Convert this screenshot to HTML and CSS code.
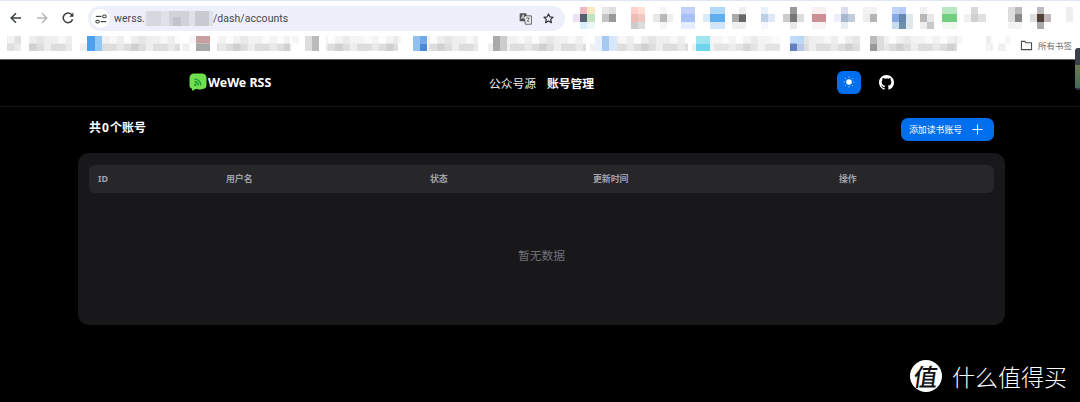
FILE: index.html
```html
<!DOCTYPE html>
<html lang="zh-CN">
<head>
<meta charset="utf-8">
<title>WeWe RSS</title>
<link rel="stylesheet" href="styles.css">
</head>
<body>
<header class="browser">
  <div class="toolbar">
    <div class="navbtns">
      <svg class="tb-icon" viewBox="0 0 16 16"><path d="M13 8H3.500M8 3.200 3.200 8 8 12.800" fill="none" stroke="#3c4043" stroke-width="1.500"/></svg>
      <svg class="tb-icon" viewBox="0 0 16 16"><path d="M3 8h9.500M8 3.200 12.800 8 8 12.800" fill="none" stroke="#b4b6b9" stroke-width="1.500"/></svg>
      <svg class="tb-icon" viewBox="0 0 16 16"><path d="M12.600 9.300A4.800 4.800 0 1 1 11.500 4.500L13 6" fill="none" stroke="#3c4043" stroke-width="1.500"/><path d="M13.400 2.600v4.100H9.300z" fill="#3c4043"/></svg>
    </div>
    <div class="omnibox">
      <span class="chip"><svg viewBox="0 0 14 14" class="chip-icon"><path d="M1 4h6.500" fill="none" stroke="#3c4043" stroke-width="1.400"/><rect x="9" y="2.400" width="4" height="3.200" rx="1.600" fill="none" stroke="#3c4043" stroke-width="1.200"/><rect x="1" y="8.400" width="4" height="3.200" rx="1.600" fill="none" stroke="#3c4043" stroke-width="1.200"/><path d="M6.500 10h6.500" stroke="#3c4043" stroke-width="1.400"/></svg></span>
      <span class="url">werss.</span>
      <svg class="url-blur" viewBox="0 0 68 15"><rect width="68" height="15" fill="#dfe1e9"/><rect x="2" y="0" width="14" height="15" fill="#d6d8e0"/><rect x="24" y="0" width="20" height="15" fill="#d0d2da"/><rect x="50" y="0" width="14" height="15" fill="#c8cad2"/><rect x="28" y="6" width="8" height="9" fill="#c2c4cc"/></svg>
      <span class="url">/dash/accounts</span>
      <span class="omni-end">
        <svg class="omni-icon" viewBox="0 0 16 16"><rect x=".8" y="1.500" width="8.500" height="10" rx="1" fill="#55595e"/><path d="M6.500 4.800h8.700v10.200H7.800z" fill="#fff" stroke="#3c4043" stroke-width="1"/><path d="M8.800 7.500h4.400M11 6.800v.8M9.200 12.500c1.800-1 2.800-2.500 3.100-5M9.800 9.500c.8 1.300 1.800 2.300 3.100 3" fill="none" stroke="#3c4043" stroke-width=".9"/><path d="M3 8.500l2-5 2 5M3.800 7h2.500" fill="none" stroke="#fff" stroke-width=".9"/></svg>
        <svg class="omni-icon" viewBox="0 0 16 16"><path d="M8 2.300 9.700 6l4 .4-3 2.700.9 4L8 11l-3.600 2.100.9-4-3-2.700 4-.4z" fill="none" stroke="#2a2c2f" stroke-width="1.400" stroke-linejoin="round"/></svg>
      </span>
    </div>
    <svg class="ext-mosaic" viewBox="573 7 507 22">
      <rect x="580" y="7" width="7" height="7.300" fill="#eeb8c0"/><rect x="587" y="7" width="8" height="7.300" fill="#f8e8c4"/><rect x="573" y="14" width="7" height="8" fill="#f0e0f5"/><rect x="580" y="14" width="7" height="8" fill="#556070"/><rect x="587" y="14" width="8" height="8" fill="#c4e2c4"/><rect x="580" y="22" width="7" height="7" fill="#d8f0f8"/><rect x="587" y="22" width="8" height="7" fill="#eef8f8"/>
      <rect x="602" y="7" width="7" height="7.300" fill="#e8e8e8"/><rect x="609" y="7" width="7" height="7.300" fill="#ddd"/><rect x="602" y="14" width="7" height="8" fill="#c4c4c4"/><rect x="609" y="14" width="7" height="8" fill="#999"/>
      <rect x="631" y="7" width="7" height="7.300" fill="#fcd0c8"/><rect x="638" y="7" width="7" height="7.300" fill="#fde0d8"/><rect x="631" y="14" width="7" height="8" fill="#eebbb5"/><rect x="638" y="14" width="7" height="8" fill="#f0c8c0"/><rect x="631" y="22" width="7" height="7" fill="#ccc"/><rect x="638" y="22" width="7" height="7" fill="#ddd"/>
      <rect x="660" y="7" width="7" height="7.300" fill="#f4f4f4"/><rect x="653" y="14" width="7" height="8" fill="#e8e8e8"/><rect x="660" y="14" width="7" height="8" fill="#b8b8b8"/><rect x="667" y="14" width="6" height="8" fill="#eee"/><rect x="660" y="22" width="7" height="7" fill="#f5f5f5"/>
      <rect x="681" y="7" width="14" height="7.300" fill="#c0d0fb"/><rect x="681" y="14" width="14" height="8" fill="#a8c0f8"/><rect x="681" y="22" width="14" height="7" fill="#e4ecfd"/>
      <rect x="710" y="7" width="15" height="7.300" fill="#b0d8f8"/><rect x="703" y="14" width="7" height="8" fill="#d8ecfc"/><rect x="710" y="14" width="15" height="8" fill="#60aef0"/><rect x="710" y="22" width="15" height="7" fill="#d0e4fa"/>
      <rect x="732" y="14" width="7" height="8" fill="#aaa"/><rect x="739" y="14" width="7" height="8" fill="#666"/><rect x="732" y="22" width="14" height="7" fill="#f0f0f0"/><rect x="739" y="7" width="7" height="7.300" fill="#eee"/>
      <rect x="761" y="7" width="7" height="7.300" fill="#e8f0fc"/><rect x="761" y="14" width="7" height="8" fill="#c0cfe8"/><rect x="768" y="14" width="7" height="8" fill="#e0e8f5"/><rect x="761" y="22" width="7" height="7" fill="#f4f6fb"/>
      <rect x="790" y="7" width="7" height="7.300" fill="#999"/><rect x="783" y="14" width="7" height="8" fill="#ccc"/><rect x="790" y="14" width="7" height="8" fill="#777"/><rect x="797" y="14" width="7" height="8" fill="#ddd"/><rect x="790" y="22" width="7" height="7" fill="#e8e8e8"/>
      <rect x="812" y="7" width="14" height="7.300" fill="#f8f0f0"/><rect x="812" y="14" width="14" height="8" fill="#cc8f96"/><rect x="812" y="22" width="14" height="7" fill="#f8f4f4"/>
      <rect x="841" y="7" width="7" height="7.300" fill="#dde"/><rect x="834" y="14" width="7" height="8" fill="#eef"/><rect x="841" y="14" width="7" height="8" fill="#a8b8cc"/><rect x="848" y="14" width="7" height="8" fill="#c0ccd8"/><rect x="841" y="22" width="7" height="7" fill="#e8ecf4"/>
      <rect x="863" y="7" width="14" height="7.300" fill="#f2f2f2"/><rect x="863" y="14" width="7" height="8" fill="#eee"/><rect x="870" y="14" width="7" height="8" fill="#b5b5b5"/>
      <rect x="892" y="7" width="7" height="7.300" fill="#c0d4fa"/><rect x="899" y="7" width="7" height="7.300" fill="#b8ccf8"/><rect x="892" y="14" width="7" height="8" fill="#88a8e8"/><rect x="899" y="14" width="7" height="8" fill="#6688aa"/><rect x="906" y="14" width="7" height="8" fill="#dde8ee"/><rect x="892" y="22" width="7" height="7" fill="#c8dcf0"/><rect x="899" y="22" width="7" height="7" fill="#6f90ac"/><rect x="906" y="22" width="7" height="7" fill="#e0e8ee"/>
      <rect x="920" y="7" width="7" height="7.300" fill="#f0f0f0"/><rect x="920" y="14" width="7" height="8" fill="#b8b8b8"/><rect x="927" y="14" width="7" height="8" fill="#e8e8e8"/><rect x="920" y="22" width="7" height="7" fill="#eee"/><rect x="927" y="22" width="7" height="7" fill="#c8c8c8"/>
      <rect x="942" y="7" width="15" height="7.300" fill="#b8e8c0"/><rect x="942" y="14" width="15" height="8" fill="#70d080"/><rect x="942" y="22" width="15" height="7" fill="#f0f8f0"/>
      <rect x="971" y="7" width="7" height="7.300" fill="#d8d8d8"/><rect x="964" y="14" width="7" height="8" fill="#f0f0f0"/><rect x="971" y="14" width="7" height="8" fill="#d0d0d0"/><rect x="978" y="14" width="8" height="8" fill="#e0e0e0"/>
      <rect x="1008" y="7" width="7" height="7.300" fill="#ddd"/><rect x="1015" y="7" width="7" height="7.300" fill="#bbb"/><rect x="1008" y="14" width="7" height="8" fill="#ddd"/><rect x="1015" y="14" width="7" height="8" fill="#888"/><rect x="1008" y="22" width="14" height="7" fill="#f4f4f4"/>
      <rect x="1037" y="7" width="7" height="7.300" fill="#bbb"/><rect x="1030" y="14" width="7" height="8" fill="#ddd"/><rect x="1037" y="14" width="7" height="8" fill="#504038"/><rect x="1044" y="14" width="7" height="8" fill="#c0b8b8"/><rect x="1037" y="22" width="7" height="7" fill="#aaa"/>
      <rect x="1066" y="7" width="7" height="15" fill="#eee"/>
    </svg>
  </div>
  <div class="bookmarks">
    <svg class="book-mosaic" viewBox="0 36 1010 15">
      <defs>
        <pattern id="grain" x="0" y="36" width="51" height="15" patternUnits="userSpaceOnUse">
          <rect x="0" y="0" width="7.300" height="7.500" fill="#fff" fill-opacity=".1"/>
          <rect x="7.300" y="0" width="7.300" height="7.500" fill="#fff" fill-opacity=".6"/>
          <rect x="14.600" y="7.500" width="7.300" height="7.500" fill="#fff" fill-opacity=".35"/>
          <rect x="21.900" y="0" width="7.300" height="7.500" fill="#fff" fill-opacity=".8"/>
          <rect x="29.200" y="7.500" width="7.300" height="7.500" fill="#000" fill-opacity=".06"/>
          <rect x="36.500" y="0" width="7.300" height="7.500" fill="#000" fill-opacity=".04"/>
          <rect x="43.800" y="7.500" width="7.300" height="7.500" fill="#fff" fill-opacity=".5"/>
        </pattern>
      </defs>
      <rect x="7" y="36" width="14" height="15" fill="#e0e0e0"/><rect x="29" y="36" width="43" height="7.500" fill="#eee"/><rect x="29" y="43.500" width="43" height="7.500" fill="#ddd"/>
      <rect x="102" y="36" width="78" height="7.500" fill="#eee"/><rect x="102" y="43.500" width="78" height="7.500" fill="#ddd"/>
      <rect x="217" y="36" width="73" height="7.500" fill="#f2f2f2"/><rect x="217" y="43.500" width="73" height="7.500" fill="#ddd"/>
      <rect x="326" y="36" width="72" height="7.500" fill="#f4f4f4"/><rect x="326" y="43.500" width="72" height="7.500" fill="#ddd"/>
      <rect x="428" y="36" width="50" height="7.500" fill="#eee"/><rect x="428" y="43.500" width="50" height="7.500" fill="#ddd"/>
      <rect x="507" y="36" width="79" height="7.500" fill="#f0f0f0"/><rect x="507" y="43.500" width="79" height="7.500" fill="#ddd"/>
      <rect x="617" y="36" width="71" height="7.500" fill="#eee"/><rect x="617" y="43.500" width="71" height="7.500" fill="#ddd"/>
      <rect x="710" y="36" width="70" height="7.500" fill="#f4f4f4"/><rect x="710" y="43.500" width="70" height="7.500" fill="#e4e4e4"/>
      <rect x="804" y="36" width="56" height="7.500" fill="#eee"/><rect x="804" y="43.500" width="56" height="7.500" fill="#ddd"/>
      <rect x="884" y="36" width="73" height="7.500" fill="#f2f2f2"/><rect x="884" y="43.500" width="73" height="7.500" fill="#ddd"/>
      <rect x="986" y="36" width="7" height="15" fill="#eee"/>
      <rect x="0" y="36" width="1010" height="15" fill="url(#grain)"/>
      <rect x="87" y="36" width="8" height="15" fill="#4da0ef"/><rect x="95" y="36" width="7" height="15" fill="#90c8f5"/>
      <rect x="196" y="36" width="14" height="7.500" fill="#c8a0a0"/><rect x="196" y="43.500" width="14" height="7.500" fill="#a8a8a8"/>
      <rect x="305" y="36" width="7" height="15" fill="#ddd"/><rect x="312" y="36" width="7" height="15" fill="#bbb"/>
      <rect x="413" y="36" width="7" height="15" fill="#90c0f0"/><rect x="420" y="36" width="7" height="7.500" fill="#70a8e8"/><rect x="420" y="43.500" width="7" height="7.500" fill="#4a88d8"/>
      <rect x="493" y="36" width="7" height="15" fill="#aaa"/><rect x="500" y="36" width="7" height="15" fill="#ccc"/>
      <rect x="595" y="36" width="7" height="15" fill="#e8f0fc"/><rect x="602" y="36" width="7" height="15" fill="#a8c8f4"/><rect x="609" y="36" width="8" height="15" fill="#d8e8fc"/>
      <rect x="696" y="36" width="14" height="7.500" fill="#a0e4ee"/><rect x="696" y="43.500" width="14" height="7.500" fill="#70d4ee"/>
      <rect x="790" y="36" width="7" height="7.500" fill="#c0dcf8"/><rect x="790" y="43.500" width="7" height="7.500" fill="#6080c0"/><rect x="797" y="36" width="7" height="7.500" fill="#b8d8f8"/><rect x="797" y="43.500" width="7" height="7.500" fill="#b8c8e8"/>
      <rect x="870" y="36" width="7" height="7.500" fill="#bbb"/><rect x="870" y="43.500" width="7" height="7.500" fill="#999"/><rect x="877" y="36" width="7" height="15" fill="#ddd"/>
    </svg>
    <span class="allbooks">
      <svg class="folder" viewBox="0 0 14 12"><path d="M1.500 1.500h3.700l1.300 1.500h6v7.500h-11z" fill="none" stroke="#4a4d51" stroke-width="1.200"/></svg>
      所有书签
    </span>
  </div>
</header>

<div class="app">
  <nav class="topnav">
    <a class="brand">
      <svg class="logo" viewBox="0 0 18 19"><path d="M5 .5h8c2.800 0 4.500 1.800 4.500 4.500v7.500c0 2-1.200 3.200-3 3.300-1.500.1-2.500.8-4 .8-1.700 0-2.200-.9-3.700-.6-1 .2-2 1.800-3 1.800-.8 0-.5-1.600-1.200-2.200C1.300 15.100.5 14 .5 12.500V5C.5 2.300 2.300.5 5 .5z" fill="#71e04f"/><path d="M5.500 6.200c3.700 0 6.300 2.600 6.300 6.300M5.500 8.800c2.200 0 3.700 1.500 3.700 3.700" fill="none" stroke="#1e9a3a" stroke-width="1.400"/><circle cx="6.300" cy="11.700" r="1.200" fill="#1e9a3a"/></svg>
      <span class="brand-name">WeWe RSS</span>
    </a>
    <div class="navlinks">
      <a class="navlink">公众号源</a>
      <a class="navlink active">账号管理</a>
    </div>
    <div class="navtools">
      <button class="theme-btn" type="button">
        <svg viewBox="0 0 12 12" class="sun"><circle cx="6" cy="6" r="2.800" fill="#fff"/><path d="M6 .6v1M6 10.400v1M.6 6h1M10.400 6h1M2.200 2.200l.7.7M9.100 9.100l.7.7M2.200 9.800l.7-.7M9.100 2.900l.7-.7" stroke="#fff" stroke-width=".8"/></svg>
      </button>
      <svg class="github" viewBox="0 0 16 16"><path fill="#fff" d="M8 0C3.580 0 0 3.580 0 8c0 3.540 2.290 6.530 5.470 7.590.4.070.55-.17.55-.38 0-.19-.01-.82-.01-1.490-2.010.37-2.530-.49-2.690-.94-.09-.23-.48-.94-.82-1.130-.28-.15-.68-.52-.01-.53.63-.01 1.080.58 1.230.82.720 1.210 1.870.87 2.330.66.070-.52.280-.87.510-1.070-1.780-.2-3.640-.89-3.640-3.950 0-.87.310-1.590.820-2.150-.08-.2-.36-1.020.080-2.120 0 0 .67-.21 2.200.82.640-.18 1.320-.27 2-.27.680 0 1.360.09 2 .27 1.530-1.040 2.200-.82 2.200-.82.440 1.100.160 1.920.080 2.120.510.560.820 1.270.820 2.150 0 3.070-1.870 3.750-3.650 3.950.290.250.540.730.540 1.480 0 1.070-.01 1.930-.01 2.200 0 .21.150.46.550.38A8.013 8.013 0 0 0 16 8c0-4.420-3.580-8-8-8z"/></svg>
    </div>
  </nav>

  <main class="content">
    <div class="page-head">
      <h1 class="page-title">共<span class="count">0</span>个账号</h1>
      <button class="add-btn" type="button">添加读书账号
        <svg viewBox="0 0 12 12" class="plus"><path d="M6 .5v11M.5 6h11" stroke="#fff" stroke-width="1"/></svg>
      </button>
    </div>
    <section class="card">
      <div class="thead">
        <span>ID</span><span>用户名</span><span>状态</span><span>更新时间</span><span>操作</span>
      </div>
      <div class="empty">暂无数据</div>
    </section>
  </main>
</div>

<div class="watermark">
  <span class="wm-badge"><span class="wm-glyph">值</span></span>
  <span class="wm-text">什么值得买</span>
</div>
<div class="edge-thumb"></div>
</body>
</html>
```

FILE: styles.css
```css
* { box-sizing: border-box; }
html, body { margin: 0; padding: 0; }
body {
  width: 1080px;
  height: 402px;
  overflow: hidden;
  background: #000;
  position: relative;
  font-family: "Noto Sans", "Noto Sans CJK SC", sans-serif;
}
svg { display: block; flex: none; }

/* browser chrome */
.browser {
  height: 60px;
  background: #fff;
  border-top: 1px solid #dfe6f6;
  border-bottom: 1px solid #5f5f5f;
}
.toolbar {
  height: 34px;
  display: flex;
  align-items: center;
}
.navbtns {
  width: 88px;
  display: flex;
  padding-left: 8px;
  gap: 10px;
}
.tb-icon { width: 16px; height: 16px; }
.omnibox {
  width: 477px;
  height: 25px;
  margin-top: 1px;
  background: #edf0fa;
  border-radius: 13px;
  display: flex;
  align-items: center;
  padding-left: 3px;
}
.chip {
  width: 19px;
  height: 19px;
  border-radius: 50%;
  background: #fff;
  display: flex;
  align-items: center;
  justify-content: center;
  margin-right: 4px;
}
.chip-icon { width: 12px; height: 12px; }
.url {
  font-family: Roboto, sans-serif;
  font-size: 10.500px;
  letter-spacing: .05px;
  color: #45484c;
}
.url-blur { width: 68px; height: 15px; }
.omni-end {
  margin-left: auto;
  display: flex;
  gap: 10px;
  padding-right: 10px;
}
.omni-icon { width: 13px; height: 13px; }
.ext-mosaic { width: 507px; height: 22px; margin-left: 8px; filter: blur(.5px); }
.bookmarks {
  height: 24px;
  display: flex;
  align-items: flex-start;
  padding-top: 1px;
  position: relative;
}
.book-mosaic { width: 1010px; height: 15px; filter: blur(.5px); }
.allbooks {
  display: flex;
  align-items: center;
  gap: 5px;
  font-size: 8.500px;
  color: #6a6a6a;
  margin: 3px 0 0 10px;
  white-space: nowrap;
}
.folder { width: 13px; height: 11px; }

/* app */
.app { color: #fff; }
.topnav {
  height: 47px;
  border-bottom: 1px solid #141414;
  display: flex;
  align-items: center;
  padding: 0 186px 2px 189px;
}
.brand { display: flex; align-items: center; width: 300px; }
.logo { width: 18px; height: 19px; }
.brand-name {
  font-size: 12.400px;
  font-weight: 700;
  margin-left: 1px;
}
.navlinks { display: flex; gap: 11px; }
.navlink { font-size: 11.750px; font-weight: 400; color: #eee; }
.navlink.active { font-weight: 700; color: #fff; }
.navtools {
  margin-left: auto;
  display: flex;
  align-items: center;
  gap: 18px;
}
.theme-btn {
  width: 24px;
  height: 23px;
  padding: 0;
  border: 0;
  border-radius: 6px;
  background: #006fee;
  display: flex;
  align-items: center;
  justify-content: center;
}
.sun { width: 12px; height: 12px; }
.github { width: 15px; height: 15px; }

.content { padding: 0 75px 0 78px; }
.page-head {
  display: flex;
  justify-content: space-between;
  padding: 11px 11px 0 11px;
  height: 46px;
}
.page-title {
  margin: 0;
  font-size: 12px;
  font-weight: 700;
  line-height: 19px;
}
.count { margin: 0 1px; }
.add-btn {
  width: 93px;
  height: 23px;
  border: 0;
  border-radius: 7px;
  background: #006fee;
  color: #fff;
  font-family: inherit;
  font-size: 8.900px;
  display: flex;
  align-items: center;
  justify-content: space-between;
  padding: 0 11px 0 8px;
}
.plus { width: 11px; height: 11px; }
.card {
  width: 927px;
  height: 172px;
  background: #18181b;
  border-radius: 11px;
  padding: 12px 11px;
}
.thead {
  height: 28px;
  background: #27272a;
  border-radius: 6px;
  display: grid;
  grid-template-columns: 128px 204px 163px 246px 1fr;
  align-items: center;
  padding: 0 0 2px 9px;
  font-size: 8.900px;
  font-weight: 700;
  color: #a1a1aa;
}
.empty {
  height: 122px;
  display: flex;
  align-items: center;
  justify-content: center;
  font-size: 11.750px;
  color: #71717a;
}

/* overlays */
.watermark {
  position: absolute;
  left: 910px;
  top: 360px;
  display: flex;
  align-items: center;
  gap: 10px;
  color: #fff;
}
.wm-badge {
  width: 32px;
  height: 32px;
  border-radius: 50%;
  background: #fff;
  color: #111;
  display: flex;
  align-items: center;
  justify-content: center;
  font-family: "Noto Sans CJK SC", sans-serif;
}
.wm-glyph {
  font-size: 24px;
  line-height: 1;
  font-weight: 500;
  transform: skewX(-8deg);
}
.wm-text {
  font-size: 23px;
  line-height: 32px;
  font-weight: 300;
  font-family: "Noto Sans CJK SC", sans-serif;
}
.edge-thumb {
  position: absolute;
  left: 1075px;
  top: 48px;
  width: 5px;
  height: 42px;
  border-radius: 3px 0 0 3px;
  background: linear-gradient(#3a3f4c 0 17px, #6e7a4a 17px, #3f6a5a 40px, #2e3240 40px);
}
```
